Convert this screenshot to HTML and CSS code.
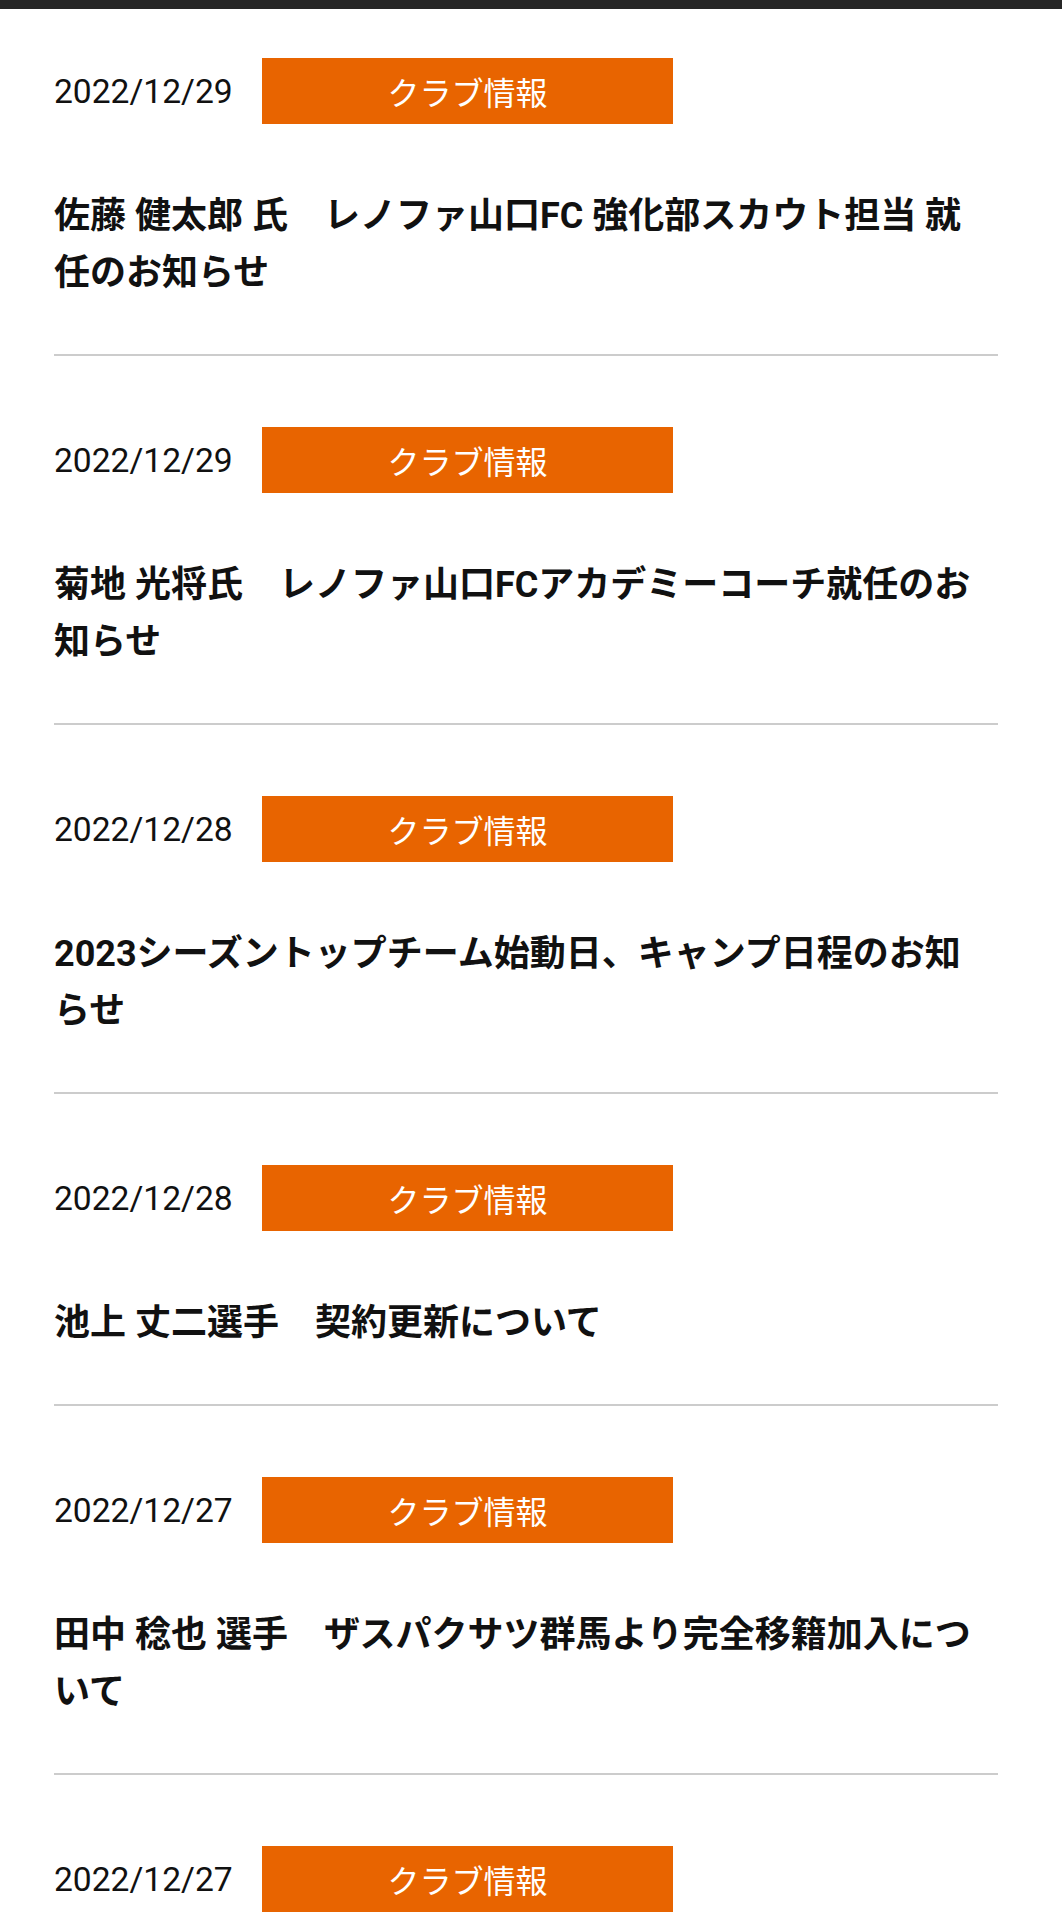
FILE: index.html
```html
<!DOCTYPE html>
<html lang="ja">
<head>
<meta charset="utf-8">
<title>ニュース</title>
<link rel="stylesheet" href="styles.css">
</head>
<body>
<div class="topbar"></div>
<ul class="news">
  <li class="item">
    <div class="meta"><span class="date">2022/12/29</span><span class="cat">クラブ情報</span></div>
    <p class="title">佐藤 健太郎 氏　レノファ山口FC 強化部スカウト担当 就任のお知らせ</p>
  </li>
  <li class="item">
    <div class="meta"><span class="date">2022/12/29</span><span class="cat">クラブ情報</span></div>
    <p class="title">菊地 光将氏　レノファ山口FCアカデミーコーチ就任のお知らせ</p>
  </li>
  <li class="item">
    <div class="meta"><span class="date">2022/12/28</span><span class="cat">クラブ情報</span></div>
    <p class="title">2023シーズントップチーム始動日、キャンプ日程のお知らせ</p>
  </li>
  <li class="item">
    <div class="meta"><span class="date">2022/12/28</span><span class="cat">クラブ情報</span></div>
    <p class="title">池上 丈二選手　契約更新について</p>
  </li>
  <li class="item">
    <div class="meta"><span class="date">2022/12/27</span><span class="cat">クラブ情報</span></div>
    <p class="title">田中 稔也 選手　ザスパクサツ群馬より完全移籍加入について</p>
  </li>
  <li class="item last">
    <div class="meta"><span class="date">2022/12/27</span><span class="cat">クラブ情報</span></div>
  </li>
</ul>
</body>
</html>
```
FILE: styles.css
```css
html, body {
  margin: 0;
  padding: 0;
  background: #ffffff;
  overflow: hidden;
}
body {
  font-family: Roboto, "Noto Sans CJK JP", sans-serif;
  color: #111111;
}
.topbar {
  height: 9px;
  background: #262626;
}
.news {
  list-style: none;
  margin: 0;
  padding: 0 64px 0 54px;
}
.item {
  padding: 71px 0 52px;
  border-bottom: 2px solid #cccccc;
}
.item:first-child {
  padding-top: 49px;
}
.item.last {
  border-bottom: none;
  padding-bottom: 0;
}
.meta {
  display: grid;
  grid-template-columns: 208px 411px;
  align-items: center;
}
.date {
  font-family: Roboto, sans-serif;
  font-size: 33.6px;
  color: #111111;
}
.cat {
  height: 66px;
  background: #e86400;
  color: #ffffff;
  font-family: "Noto Sans CJK JP", sans-serif;
  font-weight: 400;
  font-size: 32px;
  display: flex;
  align-items: center;
  justify-content: center;
}
.title {
  margin: 64px 0 0;
  padding-right: 14px;
  font-family: Roboto, "Noto Sans CJK JP", sans-serif;
  font-weight: 700;
  font-size: 36px;
  line-height: 57px;
  color: #111111;
}
```
